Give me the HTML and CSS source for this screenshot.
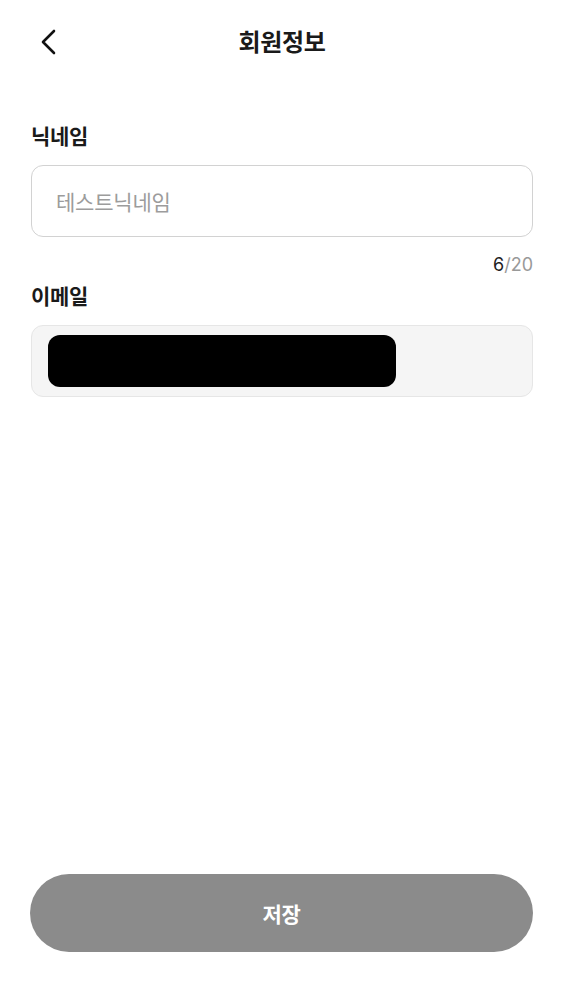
FILE: index.html
```html
<!DOCTYPE html>
<html lang="ko">
<head>
<meta charset="utf-8">
<link rel="stylesheet" href="styles.css">
</head>
<body>
<div class="page">
  <header class="header">
    <button class="back" aria-label="뒤로">
      <svg width="18" height="26" viewBox="0 0 18 26"><path d="M15 2 L4 13 L15 24" fill="none" stroke="#111" stroke-width="2.6" stroke-linecap="round" stroke-linejoin="round"/></svg>
    </button>
    <h1 class="title">회원정보</h1>
  </header>
  <main class="form">
    <label class="label">닉네임</label>
    <div class="field"><span class="placeholder">테스트닉네임</span></div>
    <div class="counter"><span class="cur">6</span>/20</div>
    <label class="label label-email">이메일</label>
    <div class="field field-disabled"><span class="redact"></span></div>
  </main>
  <footer class="footer">
    <button class="save">저장</button>
  </footer>
</div>
</body>
</html>
```
FILE: styles.css
```css
* { box-sizing: border-box; }
html, body { margin: 0; padding: 0; background: #fff; }
body { font-family: "Noto Sans CJK KR", "Noto Sans", sans-serif; color: #1a1a1a; }
.page { height: 1000px; display: flex; flex-direction: column; padding: 0 29px 0 31px; }
.header { position: relative; height: 84px; display: flex; align-items: center; justify-content: center; }
.back { position: absolute; left: 8px; top: 29px; border: 0; background: none; padding: 0; width: 18px; height: 26px; display: flex; }
.title { margin: -2px 0 0; font-size: 24px; font-weight: 700; letter-spacing: -0.3px; line-height: 1; color: #1a1a1a; }
.form { display: flex; flex-direction: column; padding-top: 37px; flex: 1; }
.label { font-size: 21px; font-weight: 700; line-height: 28px; height: 28px; letter-spacing: -0.3px; }
.field { margin-top: 16px; height: 72px; border: 1.5px solid #d2d2d2; border-radius: 12px; display: flex; align-items: center; padding: 0 24px; }
.placeholder { font-size: 21px; color: #9c9c9c; letter-spacing: -0.2px; }
.counter { text-align: right; font-family: "Inter", "Noto Sans", sans-serif; font-size: 18px; color: #999; margin-top: 16px; line-height: 24px; }
.counter .cur { color: #222; }
.label-email { margin-top: 4px; }
.field-disabled { margin-top: 16px; background: #f5f5f5; border: 1px solid #e6e6e6; padding: 0 16px; }
.redact { display: block; width: 348px; height: 52px; background: #000; border-radius: 12px; }
.footer { padding-bottom: 48px; }
.save { width: 503px; margin-left: -1px; height: 78px; border: 0; border-radius: 39px; background: #8b8b8b; color: #fff; font-family: "Noto Sans CJK KR", sans-serif; font-size: 21px; font-weight: 700; letter-spacing: -0.3px; }
```
